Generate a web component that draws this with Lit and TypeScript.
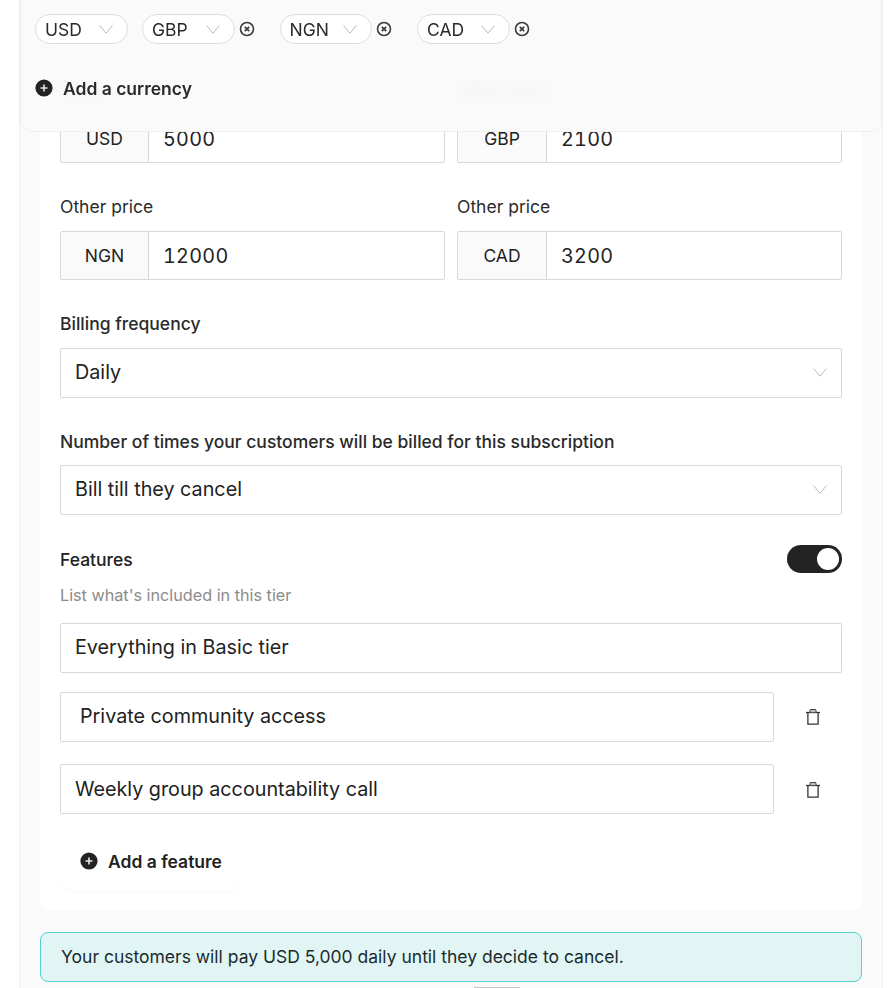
import { LitElement, html, css } from "lit";
import { customElement } from "lit/decorators.js";

const chevron = html`<svg class="chev" viewBox="0 0 14 9" fill="none"><path d="M.6.6L7 8.2 13.4.6" stroke="#b9b9b9" stroke-width="1"/></svg>`;
const plus = html`<svg class="plus" viewBox="0 0 18 18"><circle cx="9" cy="9" r="8.6" fill="#232323"/><path d="M5.5 9h7M9 5.5v7" stroke="#e6e6e6" stroke-width="1.6"/></svg>`;
const remove = html`<svg class="remove" viewBox="0 0 16 16" fill="none"><circle cx="8" cy="8" r="6.5" stroke="#3a3a3a" stroke-width="1.6"/><path d="M5.8 5.8l4.4 4.4M10.2 5.8l-4.4 4.4" stroke="#3a3a3a" stroke-width="1.7"/></svg>`;
const trash = html`<svg class="trash" viewBox="0 0 16 18" fill="none"><path d="M1 4.5h14" stroke="#333" stroke-width="1.3"/><path d="M4.8 4.2l.5-2.7h5.4l.5 2.7" fill="#bdbdbd" stroke="#444" stroke-width="1"/><path d="M2.9 4.5v11.6h10.2V4.5" stroke="#333" stroke-width="1.3"/></svg>`;

@customElement("app-root")
export class AppRoot extends LitElement {
  static styles = css`
    :host { display: block; width: 894px; height: 988px; overflow: hidden; background: #fff; position: relative;
      font-family: Inter, "Liberation Sans", sans-serif; color: #222; }
    * { box-sizing: border-box; }
    .panel { margin-left: 19px; width: 864px; height: 988px; background: #fafafa; border: 1px solid #f0f0f0; border-width: 0 1px; padding: 0 20px; overflow: hidden; }
    .card { background: #fff; border-radius: 0 0 12px 12px; padding: 78px 20px 20px; height: 911px; }
    .row2 { display: grid; grid-template-columns: 385px 385px; gap: 12px; margin-bottom: 32px; }
    .label { font-size: 17.5px; line-height: 24px; margin-bottom: 12px; color: #2a2a2a; white-space: nowrap; }
    .label.long { line-height: 25px; margin-bottom: 11px; }
    .strong { font-weight: 500; font-size: 17.5px; }
    .price { display: flex; height: 49px; border: 1px solid #d8d8d8; border-radius: 2px; font-size: 19.75px; align-items: stretch; letter-spacing: .3px; font-variant-numeric: tabular-nums; }
    .code { width: 88px; flex: none; background: #fafafa; border-right: 1px solid #d8d8d8; display: flex; align-items: center; justify-content: center; font-size: 17.5px; letter-spacing: 0; }
    .code.wide { width: 89px; }
    .val { padding-left: 14px; display: flex; align-items: center; }
    .select, .text { display: flex; align-items: center; justify-content: space-between; height: 50px; border: 1px solid #d8d8d8; border-radius: 2px; padding: 0 14px 2px; font-size: 19.75px; white-space: nowrap; }
    .select { margin-bottom: 31px; }
    .select.tight { margin-bottom: 30px; }
    .chev { width: 14px; height: 9px; display: block; flex: none; }
    .feat-head { display: flex; justify-content: space-between; align-items: center; height: 28px; }
    .toggle { width: 55px; height: 28px; border-radius: 14px; background: #232323; display: flex; justify-content: flex-end; align-items: center; padding-right: 3px; }
    .toggle i { display: block; width: 22px; height: 22px; border-radius: 50%; background: #fff; }
    .hint { font-size: 16.2px; line-height: 24px; color: #8b8b8b; margin: 10px 0 16px; }
    .text.full { margin-bottom: 19px; }
    .fr { display: flex; align-items: center; width: 782px; }
    .fr .text { width: 714px; flex: none; }
    .fr .indent { padding-left: 19px; }
    .fr + .fr { margin-top: 22px; }
    .fr + .fr .text { padding-bottom: 0; }
    .fr + .fr .trash { margin-top: 2px; }
    .trash-wrap { flex: 1; display: flex; justify-content: center; padding-left: 9px; }
    .trash { width: 16px; height: 18px; display: block; }
    .add { display: flex; align-items: center; gap: 10px; font-weight: 600; white-space: nowrap; }
    .plus { width: 18px; height: 18px; flex: none; display: block; }
    .add-feature { width: 180px; height: 66px; margin-top: 11px; padding: 6px 20px 0; font-size: 17.5px; color: #222; border-radius: 16px; box-shadow: 0 2px 3px rgba(0,0,0,.025); }
    .alert { margin-top: 21px; height: 50px; background: #e1f6f4; border: 1px solid #55d2cb; border-radius: 8px; padding: 0 20px 2px; display: flex; align-items: center; font-size: 17.5px; color: #1b2a2e; }
    .tick { width: 46px; height: 2px; background: #c8c8c8; margin: 5px 0 0 434px; }
    .overlay { position: absolute; left: 20px; top: -21px; width: 862px; height: 153px; background: rgba(250,250,250,.92); backdrop-filter: blur(8px); border: 1px solid #f0f0f0; border-radius: 12px; padding: 34px 14px 0; }
    .chips { display: flex; align-items: center; height: 30px; }
    .chip { width: 92.5px; height: 30px; border: 1px solid #dcdcdc; border-radius: 15px; background: #fff; display: flex; align-items: center; justify-content: space-between; padding: 0 14px 0 9px; font-size: 17.5px; color: #2a2a2a; }
    .chip.first { margin-right: 14.5px; }
    .remove { width: 16px; height: 16px; margin-left: 4px; flex: none; display: block; }
    .gap { width: 25px; flex: none; }
    .add-currency { margin-top: 29px; font-size: 17.5px; height: 30px; color: #2a2a2a; }
  `;

  render() {
    return html`
      <div class="panel">
        <div class="card">
          <div class="row2">
            <div><div class="label">Price</div><div class="price"><div class="code">USD</div><div class="val">5000</div></div></div>
            <div><div class="label">Other price</div><div class="price"><div class="code wide">GBP</div><div class="val">2100</div></div></div>
          </div>
          <div class="row2">
            <div><div class="label">Other price</div><div class="price"><div class="code">NGN</div><div class="val">12000</div></div></div>
            <div><div class="label">Other price</div><div class="price"><div class="code wide">CAD</div><div class="val">3200</div></div></div>
          </div>
          <div class="label strong">Billing frequency</div>
          <div class="select"><span>Daily</span>${chevron}</div>
          <div class="label long strong">Number of times your customers will be billed for this subscription</div>
          <div class="select tight"><span>Bill till they cancel</span>${chevron}</div>
          <div class="feat-head"><div class="strong">Features</div><div class="toggle"><i></i></div></div>
          <div class="hint">List what's included in this tier</div>
          <div class="text full">Everything in Basic tier</div>
          <div class="fr"><div class="text indent">Private community access</div><div class="trash-wrap">${trash}</div></div>
          <div class="fr"><div class="text">Weekly group accountability call</div><div class="trash-wrap">${trash}</div></div>
          <div class="add add-feature">${plus}<span>Add a feature</span></div>
        </div>
        <div class="alert">Your customers will pay USD 5,000 daily until they decide to cancel.</div>
        <div class="tick"></div>
      </div>
      <div class="overlay">
        <div class="chips">
          <div class="chip first"><span>USD</span>${chevron}</div>
          <div class="chip"><span>GBP</span>${chevron}</div>${remove}<div class="gap"></div>
          <div class="chip"><span>NGN</span>${chevron}</div>${remove}<div class="gap"></div>
          <div class="chip"><span>CAD</span>${chevron}</div>${remove}
        </div>
        <div class="add add-currency">${plus}<span>Add a currency</span></div>
      </div>
    `;
  }
}
